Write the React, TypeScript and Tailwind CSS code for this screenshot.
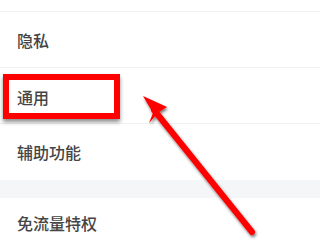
import React from 'react';

const rows = ['隐私', '通用', '辅助功能'];

function Arrow() {
  return (
    <svg className="absolute left-0 top-0 pointer-events-none" width="320" height="240" viewBox="0 0 320 240">
      <defs>
        <filter id="sh" x="-20%" y="-20%" width="140%" height="140%">
          <feDropShadow dx="1" dy="2" stdDeviation="1.6" floodColor="#000" floodOpacity="0.55" />
        </filter>
      </defs>
      <g filter="url(#sh)">
        <line x1="252" y1="232" x2="154" y2="110" stroke="#ff0000" strokeWidth="6" strokeLinecap="round" />
        <polygon points="143,96 167,107 159,112 149,123 153,113" fill="#ff0000" />
      </g>
    </svg>
  );
}

export default function App() {
  return (
    <div className="relative w-[320px] h-[240px] overflow-hidden bg-white font-['Noto_Sans_CJK_SC','Noto_Sans',sans-serif] text-[#454545]">
      <div className="h-[12px] border-b border-[#f1f1f3]" />
      {rows.map((label, i) => (
        <div key={label} className={`h-[56px] flex items-center ${i < 2 ? 'border-b border-[#f1f1f3]' : ''}`}>
          {label === '通用' ? (
            <div className="ml-[3px] mt-[2px] w-[117px] h-[45px] border-[6px] border-[#ff0000] shadow-[0_3px_4px_rgba(0,0,0,0.45)] flex items-center pl-[8px]">
              <span className="text-[16px] leading-none font-medium">{label}</span>
            </div>
          ) : (
            <span className="pl-[17px] text-[16px] leading-none font-medium">{label}</span>
          )}
        </div>
      ))}
      <div className="h-[18px] bg-[#f5f6f8]" />
      <div className="h-[50px] flex items-center">
        <span className="pl-[17px] text-[16px] leading-none font-medium">免流量特权</span>
      </div>
      <Arrow />
    </div>
  );
}
